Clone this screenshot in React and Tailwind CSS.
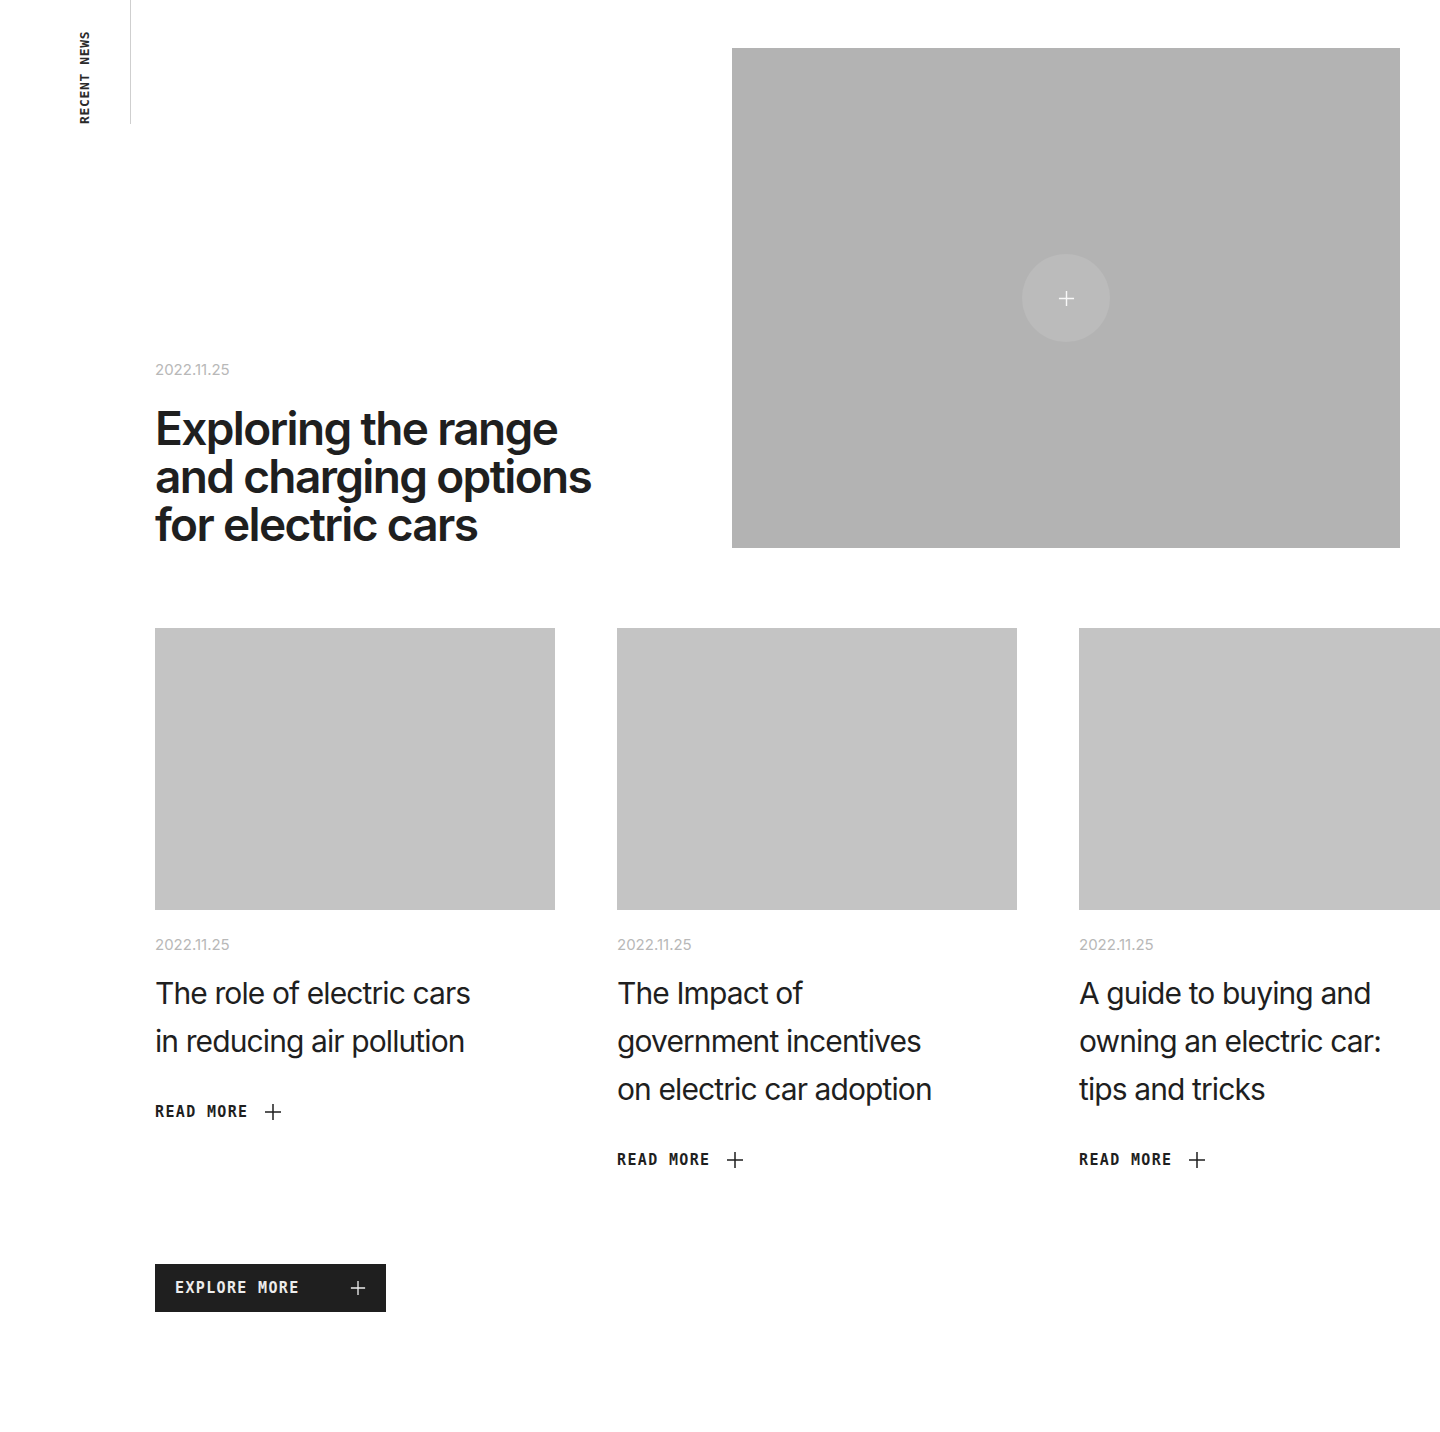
const cards = [
  { date: "2022.11.25", title: ["The role of electric cars", "in reducing air pollution"] },
  { date: "2022.11.25", title: ["The Impact of", "government incentives", "on electric car adoption"] },
  { date: "2022.11.25", title: ["A guide to buying and", "owning an electric car:", "tips and tricks"] },
];

const sans = "font-['Inter','Lato',sans-serif]";
const mono = "font-['DejaVu_Sans_Mono','Liberation_Mono',monospace]";

function PlusIcon({ className }) {
  return (
    <svg viewBox="0 0 18 18" className={className} fill="none" stroke="currentColor" strokeWidth="1.5">
      <path d="M9 1v16M1 9h16" />
    </svg>
  );
}

function NewsCard({ card }) {
  return (
    <div className="w-[400px] shrink-0">
      <div className="h-[282px] bg-[#c4c4c4]" />
      <div className={`${sans} mt-[25px] text-[15px] leading-5 text-[#b8b8b8]`}>{card.date}</div>
      <h3 className={`${sans} mt-[14px] text-[30px] leading-[48px] text-[#1f1f1f] tracking-[-0.03em]`}>
        {card.title.map((line) => (
          <span key={line} className="block">{line}</span>
        ))}
      </h3>
      <a href="#" className={`${mono} mt-[35px] flex items-center gap-4 text-[15px] leading-6 font-bold tracking-[0.09em] text-[#1f1f1f]`}>
        READ MORE
        <PlusIcon className="w-[18px] h-[18px]" />
      </a>
    </div>
  );
}

export default function App() {
  return (
    <div className="flex min-h-[1432px] w-[1440px] overflow-hidden bg-white">
      <aside className="w-[131px] h-[124px] shrink-0 border-r border-[#cfcfcf] flex justify-end pr-[38px] pt-[32px]">
        <span className={`${mono} whitespace-nowrap [writing-mode:vertical-rl] rotate-180 text-[13px] leading-[14px] font-bold tracking-[0.05em] text-[#2a2a2a]`}>
          RECENT NEWS
        </span>
      </aside>

      <main className="flex-1 pl-6 pt-12 pb-[120px] min-w-0">
        <section className="flex items-end">
          <div className="w-[577px] shrink-0">
            <div className={`${sans} text-[15px] leading-5 text-[#b8b8b8]`}>2022.11.25</div>
            <h1 className={`${sans} mt-6 text-[46px] leading-[48px] font-semibold text-[#1f1f1f] tracking-[-0.036em]`}>
              <span className="block">Exploring the range</span>
              <span className="block">and charging options</span>
              <span className="block">for electric cars</span>
            </h1>
          </div>
          <div className="w-[668px] h-[500px] bg-[#b3b3b3] flex items-center justify-center">
            <button className="w-[88px] h-[88px] rounded-full bg-white/10 flex items-center justify-center text-white/90">
              <PlusIcon className="w-[17px] h-[17px]" />
            </button>
          </div>
        </section>

        <section className="mt-20 flex gap-[62px] items-start">
          {cards.map((card, i) => (
            <NewsCard key={i} card={card} />
          ))}
        </section>

        <button className={`${mono} mt-[92px] w-[231px] h-12 bg-[#1f1f1f] flex items-center justify-between pl-5 pr-5 text-[15px] font-bold tracking-[0.09em] text-[#ececec]`}>
          EXPLORE MORE
          <PlusIcon className="w-4 h-4" />
        </button>
      </main>
    </div>
  );
}
